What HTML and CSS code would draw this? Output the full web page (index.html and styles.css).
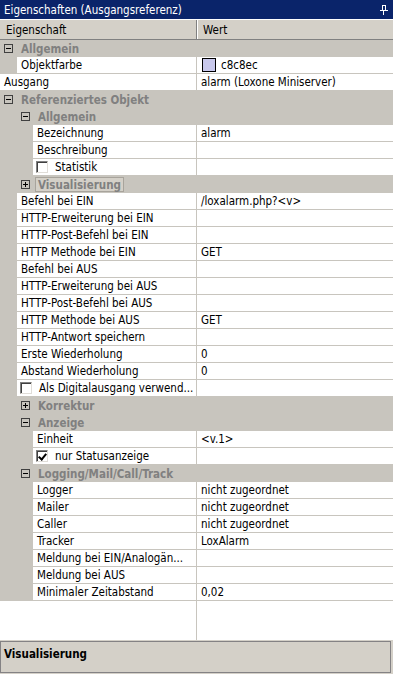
FILE: index.html
```html
<!DOCTYPE html>
<html lang="de">
<head>
    <meta charset="UTF-8">
    <meta name="viewport" content="width=device-width, initial-scale=1.0">
    <title>Eigenschaften</title>
    <link rel="stylesheet" href="styles.css">
</head>
<body>
    <div class="panel">
        <div class="titlebar">
            <span>Eigenschaften (Ausgangsreferenz)</span>
            <svg class="pin" width="8" height="10" viewBox="0 0 8 10">
                <rect x="2.5" y="0.5" width="3" height="5" fill="none" stroke="#fff"/>
                <rect x="5" y="0" width="1" height="6" fill="#fff"/>
                <rect x="0" y="5" width="8" height="1" fill="#fff"/>
                <rect x="3" y="6" width="1" height="4" fill="#fff"/>
            </svg>
        </div>

        <div class="header">
            <div class="head-name">Eigenschaft</div>
            <div class="head-value">Wert</div>
        </div>

        <div class="grid">
            <!-- Allgemein -->
            <div class="category"><span class="toggle minus"></span><span class="cat-text">Allgemein</span></div>
            <div class="row lvl1"><div class="name"><div class="cell">Objektfarbe</div></div><div class="value"><span class="swatch"></span>c8c8ec</div></div>
            <div class="row"><div class="name"><div class="cell">Ausgang</div></div><div class="value">alarm (Loxone Miniserver)</div></div>

            <!-- Referenziertes Objekt -->
            <div class="category"><span class="toggle minus"></span><span class="cat-text">Referenziertes Objekt</span></div>
            <div class="category sub"><span class="toggle minus"></span><span class="cat-text">Allgemein</span></div>
            <div class="row lvl2"><div class="name"><div class="cell">Bezeichnung</div></div><div class="value">alarm</div></div>
            <div class="row lvl2"><div class="name"><div class="cell">Beschreibung</div></div><div class="value"></div></div>
            <div class="row lvl2"><div class="name"><div class="cell check-cell"><span class="checkbox"></span>Statistik</div></div><div class="value"></div></div>
            <div class="category sub"><span class="toggle plus"></span><span class="cat-text focused">Visualisierung</span></div>
            <div class="row lvl1"><div class="name"><div class="cell">Befehl bei EIN</div></div><div class="value">/loxalarm.php?&lt;v&gt;</div></div>
            <div class="row lvl1"><div class="name"><div class="cell">HTTP-Erweiterung bei EIN</div></div><div class="value"></div></div>
            <div class="row lvl1"><div class="name"><div class="cell">HTTP-Post-Befehl bei EIN</div></div><div class="value"></div></div>
            <div class="row lvl1"><div class="name"><div class="cell">HTTP Methode bei EIN</div></div><div class="value">GET</div></div>
            <div class="row lvl1"><div class="name"><div class="cell">Befehl bei AUS</div></div><div class="value"></div></div>
            <div class="row lvl1"><div class="name"><div class="cell">HTTP-Erweiterung bei AUS</div></div><div class="value"></div></div>
            <div class="row lvl1"><div class="name"><div class="cell">HTTP-Post-Befehl bei AUS</div></div><div class="value"></div></div>
            <div class="row lvl1"><div class="name"><div class="cell">HTTP Methode bei AUS</div></div><div class="value">GET</div></div>
            <div class="row lvl1"><div class="name"><div class="cell">HTTP-Antwort speichern</div></div><div class="value"></div></div>
            <div class="row lvl1"><div class="name"><div class="cell">Erste Wiederholung</div></div><div class="value">0</div></div>
            <div class="row lvl1"><div class="name"><div class="cell">Abstand Wiederholung</div></div><div class="value">0</div></div>
            <div class="row lvl1"><div class="name"><div class="cell check-cell"><span class="checkbox"></span>Als Digitalausgang verwend...</div></div><div class="value"></div></div>

            <div class="category sub"><span class="toggle plus"></span><span class="cat-text">Korrektur</span></div>
            <div class="category sub"><span class="toggle minus"></span><span class="cat-text">Anzeige</span></div>
            <div class="row lvl2"><div class="name"><div class="cell">Einheit</div></div><div class="value">&lt;v.1&gt;</div></div>
            <div class="row lvl2"><div class="name"><div class="cell check-cell"><span class="checkbox checked"></span>nur Statusanzeige</div></div><div class="value"></div></div>

            <div class="category sub"><span class="toggle minus"></span><span class="cat-text">Logging/Mail/Call/Track</span></div>
            <div class="row lvl2"><div class="name"><div class="cell">Logger</div></div><div class="value">nicht zugeordnet</div></div>
            <div class="row lvl2"><div class="name"><div class="cell">Mailer</div></div><div class="value">nicht zugeordnet</div></div>
            <div class="row lvl2"><div class="name"><div class="cell">Caller</div></div><div class="value">nicht zugeordnet</div></div>
            <div class="row lvl2"><div class="name"><div class="cell">Tracker</div></div><div class="value">LoxAlarm</div></div>
            <div class="row lvl2"><div class="name"><div class="cell">Meldung bei EIN/Analogän...</div></div><div class="value"></div></div>
            <div class="row lvl2"><div class="name"><div class="cell">Meldung bei AUS</div></div><div class="value"></div></div>
            <div class="row lvl2"><div class="name"><div class="cell">Minimaler Zeitabstand</div></div><div class="value">0,02</div></div>

            <div class="filler"><div class="filler-name"></div><div class="filler-value"></div></div>
        </div>

        <div class="description">Visualisierung</div>
    </div>
</body>
</html>
```

FILE: styles.css
```css
* {
    box-sizing: border-box;
}

body {
    margin: 0;
    background-color: #d4d0c8;
    font-family: Tahoma, "DejaVu Sans", sans-serif;
    font-stretch: condensed;
    font-size: 11.5px;
    color: #000;
}

.panel {
    width: 393px;
    height: 674px;
    display: flex;
    flex-direction: column;
}

.titlebar {
    height: 19px;
    background-color: #0a246a;
    color: #fff;
    display: flex;
    align-items: center;
    justify-content: space-between;
    padding: 0 5px 0 4px;
}

.pin {
    display: block;
}

.header {
    height: 21px;
    display: flex;
    border-top: 1px solid #fff;
    border-bottom: 1px solid #808080;
}

.head-name {
    width: 197px;
    border-right: 1px solid #808080;
    padding-left: 6px;
    display: flex;
    align-items: center;
}

.head-value {
    flex: 1;
    border-left: 1px solid #fff;
    padding-left: 5px;
    display: flex;
    align-items: center;
}

.grid {
    height: 600px;
    background-color: #fff;
    display: flex;
    flex-direction: column;
}

.row {
    display: flex;
    height: 17px;
}

.name {
    width: 196px;
    display: flex;
    background-color: #c8c5be;
}

.cell {
    flex: 1;
    background-color: #fff;
    border-bottom: 1px solid #c8c5be;
    padding-left: 4px;
    display: flex;
    align-items: center;
    white-space: nowrap;
    overflow: hidden;
}

.lvl1 .name {
    padding-left: 17px;
}

.lvl2 .name {
    padding-left: 33px;
}

.value {
    flex: 1;
    border-left: 1px solid #c8c5be;
    border-bottom: 1px solid #c8c5be;
    padding-left: 4px;
    display: flex;
    align-items: center;
    white-space: nowrap;
}

.swatch {
    width: 14px;
    height: 14px;
    margin: 0 5px 0 1px;
    border: 1px solid #000;
    background-color: #c8c8ec;
}

.category {
    height: 17px;
    background-color: #c8c5be;
    color: #808080;
    font-weight: bold;
    display: flex;
    align-items: center;
    padding-left: 4px;
}

.category.sub {
    padding-left: 21px;
}

.toggle {
    width: 9px;
    height: 9px;
    border: 1px solid #404040;
    background-color: #c8c5be;
    position: relative;
    margin-right: 8px;
}

.toggle::before {
    content: "";
    position: absolute;
    left: 1px;
    top: 3px;
    width: 5px;
    height: 1px;
    background-color: #000;
}

.toggle.plus::after {
    content: "";
    position: absolute;
    left: 3px;
    top: 1px;
    width: 1px;
    height: 5px;
    background-color: #000;
}

.cat-text.focused {
    margin-left: -3px;
    padding: 0 2px;
    height: 15px;
    display: flex;
    align-items: center;
    border: 1px solid #a8a49c;
    background-color: #d4d0c8;
}

.check-cell {
    padding-left: 3px;
}

.checkbox {
    width: 12px;
    height: 12px;
    margin-right: 7px;
    background-color: #fff;
    border-top: 1px solid #808080;
    border-left: 1px solid #808080;
    border-right: 1px solid #e0ddd8;
    border-bottom: 1px solid #e0ddd8;
    box-shadow: inset 1px 1px 0 #404040;
    position: relative;
}

.checkbox.checked::after {
    content: "";
    position: absolute;
    left: 3px;
    top: 1px;
    width: 3px;
    height: 6px;
    border-right: 2px solid #000;
    border-bottom: 2px solid #000;
    transform: rotate(40deg);
}

.filler {
    flex: 1;
    display: flex;
}

.filler-name {
    width: 196px;
}

.filler-value {
    flex: 1;
    border-left: 1px solid #c8c5be;
}

.description {
    margin: 1px 2px 1px 0;
    flex: 1;
    border: 1px solid #848284;
    padding: 5px 3px;
    font-weight: bold;
}
```
